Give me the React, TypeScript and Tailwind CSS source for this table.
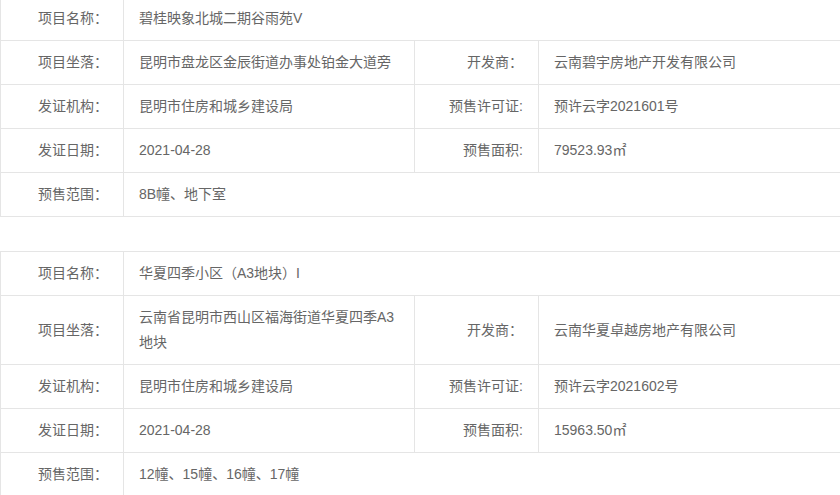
import React from "react";

type Row =
  | { kind: "full"; label: string; value: string }
  | { kind: "pair"; label: string; value: string; label2: string; value2: string };

type Project = Row[];

const PROJECTS: Project[] = [
  [
    { kind: "full", label: "项目名称：", value: "碧桂映象北城二期谷雨苑V" },
    { kind: "pair", label: "项目坐落：", value: "昆明市盘龙区金辰街道办事处铂金大道旁", label2: "开发商：", value2: "云南碧宇房地产开发有限公司" },
    { kind: "pair", label: "发证机构：", value: "昆明市住房和城乡建设局", label2: "预售许可证:", value2: "预许云字2021601号" },
    { kind: "pair", label: "发证日期：", value: "2021-04-28", label2: "预售面积:", value2: "79523.93㎡" },
    { kind: "full", label: "预售范围：", value: "8B幢、地下室" },
  ],
  [
    { kind: "full", label: "项目名称：", value: "华夏四季小区（A3地块）I" },
    { kind: "pair", label: "项目坐落：", value: "云南省昆明市西山区福海街道华夏四季A3地块", label2: "开发商：", value2: "云南华夏卓越房地产有限公司" },
    { kind: "pair", label: "发证机构：", value: "昆明市住房和城乡建设局", label2: "预售许可证:", value2: "预许云字2021602号" },
    { kind: "pair", label: "发证日期：", value: "2021-04-28", label2: "预售面积:", value2: "15963.50㎡" },
    { kind: "full", label: "预售范围：", value: "12幢、15幢、16幢、17幢" },
  ],
];

const cell = "border border-[#e5e5e5] px-[15px] py-[9px] leading-[25px] align-middle";

function ProjectTable({ rows }: { rows: Project }) {
  return (
    <table className="w-[850px] table-fixed border-collapse">
      <colgroup>
        <col className="w-[123px]" />
        <col className="w-[291px]" />
        <col className="w-[124px]" />
        <col />
      </colgroup>
      <tbody>
        {rows.map((r, i) =>
          r.kind === "full" ? (
            <tr key={i}>
              <td className={`${cell} text-right`}>{r.label}</td>
              <td className={cell} colSpan={3}>
                {r.value}
              </td>
            </tr>
          ) : (
            <tr key={i}>
              <td className={`${cell} text-right`}>{r.label}</td>
              <td className={cell}>{r.value}</td>
              <td className={`${cell} text-right`}>{r.label2}</td>
              <td className={cell}>{r.value2}</td>
            </tr>
          )
        )}
      </tbody>
    </table>
  );
}

export default function App() {
  return (
    <div
      className="w-[840px] h-[495px] overflow-hidden bg-white text-[14px] text-[#666]"
      style={{ fontFamily: '"Liberation Sans", "Noto Sans CJK SC", sans-serif' }}
    >
      <div className="-mt-[4px] flex flex-col gap-[34px]">
        {PROJECTS.map((p, i) => (
          <ProjectTable key={i} rows={p} />
        ))}
      </div>
    </div>
  );
}
